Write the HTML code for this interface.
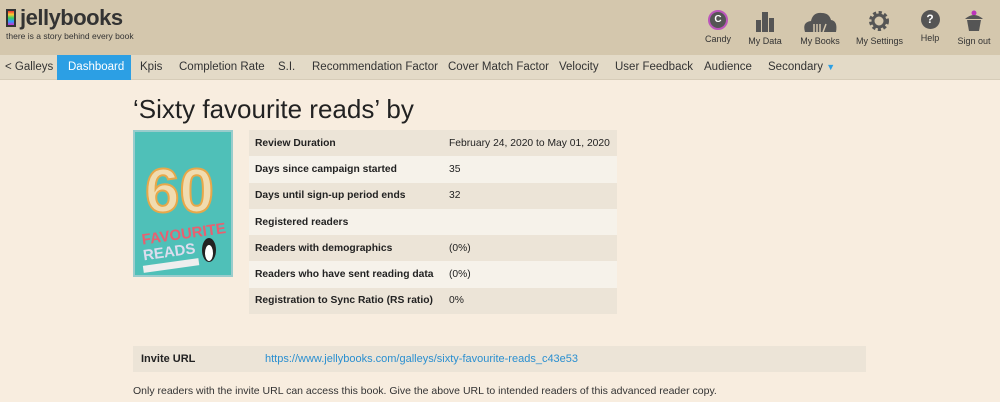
<!DOCTYPE html>
<html><head><style>
*{margin:0;padding:0;box-sizing:border-box}
body{width:1000px;height:402px;overflow:hidden;background:#f8eddf;font-family:"Liberation Sans",sans-serif;color:#222;position:relative;white-space:nowrap}
.hdr{position:absolute;left:0;top:0;width:1000px;height:55px;background:#d4c7ad}
.logo{position:absolute;left:6px;top:5px;font-weight:bold;font-size:22px;color:#333;letter-spacing:-0.5px}
.logo i{display:inline-block;width:10px;height:18px;background:linear-gradient(#e33,#fc3,#3c6,#39f,#c3c);border:2px solid #333;vertical-align:-2px;margin-right:4px}
.tag{position:absolute;left:6px;top:31px;font-size:8.5px;color:#333}
.ic{position:absolute;top:10px;text-align:center;font-size:9px;color:#333}
.ic div{margin:0 auto 4px;height:22px}
.nav{position:absolute;left:0;top:55px;width:1000px;height:25px;background:#e3dac7;border-bottom:1px solid #d6ccb8}
.nav span{position:absolute;top:0;height:25px;line-height:25px;font-size:11.5px;color:#333}
.nav .act{background:#2c9fe4;color:#fff;padding:0 11px;width:74px}
h1{position:absolute;left:133px;top:94px;font-weight:normal;font-size:26px;color:#222}
.cover{position:absolute;left:133px;top:130px;width:100px;height:147px;background:#4fc0b8;border:2px solid #9cc}
table{position:absolute;left:249px;top:130px;width:368px;border-collapse:collapse;font-size:10.3px}
td{height:26.3px;padding:0 6px}
td:first-child{font-weight:bold;width:194px}
tr:nth-child(odd){background:#ece4d7}tr:nth-child(even){background:#f6f2ea}
.inv{position:absolute;left:133px;top:346px;width:733px;height:26px;background:#ece4d7;font-size:11px;line-height:26px}
.inv b{position:absolute;left:8px}.inv a{position:absolute;left:132px;color:#2a8fd0;text-decoration:none}
.note{position:absolute;left:133px;top:385px;font-size:10.5px;color:#333}
</style></head><body>
<div class="hdr">
<div class="logo"><i></i>jellybooks</div>
<div class="tag">there is a story behind every book</div>
<div class="ic" style="left:703px;width:30px"><div style="width:20px;height:20px;border-radius:50%;background:#555;border:2px solid #b5b;color:#fff;font-size:10px;line-height:16px;font-weight:bold">C</div>Candy</div>
<div class="ic" style="left:748px;width:34px"><div><svg width="22" height="22"><rect x="2" y="10" width="5" height="12" fill="#555"/><rect x="8" y="2" width="6" height="20" fill="#555"/><rect x="15" y="8" width="5" height="14" fill="#555"/></svg></div>My Data</div>
<div class="ic" style="left:800px;width:40px"><div><svg width="36" height="22"><path d="M3 22 Q0 12 9 11 Q11 2 20 3 Q27 3 29 10 Q36 11 34 22Z" fill="#555"/><path d="M12 22V14M15 22V14M18 22V14M21 22L24 14" stroke="#d4c7ad" stroke-width="1.5"/></svg></div>My Books</div>
<div class="ic" style="left:856px;width:46px"><div><svg width="22" height="22"><circle cx="11" cy="11" r="8" fill="none" stroke="#555" stroke-width="4" stroke-dasharray="3 2.3"/><circle cx="11" cy="11" r="6" fill="none" stroke="#555" stroke-width="3"/></svg></div>My Settings</div>
<div class="ic" style="left:918px;width:24px"><div style="width:19px;height:19px;border-radius:50%;background:#555;color:#fff;font-size:12px;font-weight:bold;line-height:19px">?</div>Help</div>
<div class="ic" style="left:956px;width:36px"><div><svg width="22" height="22"><circle cx="11" cy="3" r="2.5" fill="#b3b"/><path d="M2 9 Q11 1 20 9Z" fill="#555"/><path d="M4 10H18L16 21H6Z" fill="#555"/></svg></div>Sign out</div>
</div>
<div class="nav">
<span style="left:5px">&lt; Galleys</span>
<span class="act" style="left:57px">Dashboard</span>
<span style="left:140px">Kpis</span>
<span style="left:179px">Completion Rate</span>
<span style="left:278px">S.I.</span>
<span style="left:312px">Recommendation Factor</span>
<span style="left:448px">Cover Match Factor</span>
<span style="left:559px">Velocity</span>
<span style="left:615px">User Feedback</span>
<span style="left:704px">Audience</span>
<span style="left:768px">Secondary <span style="position:static;color:#2c9fe4;font-size:9px">&#9660;</span></span>
</div>
<h1>‘Sixty favourite reads’ by</h1>
<div class="cover"><svg width="96" height="143"><text x="10" y="80" font-size="62" font-weight="bold" fill="#f1dcb0" stroke="#e7a84a" stroke-width="2" font-family="Liberation Sans">60</text><text x="6" y="108" font-size="15" font-weight="bold" fill="#e86070" font-family="Liberation Sans" transform="rotate(-8 40 100)">FAVOURITE</text><text x="8" y="124" font-size="15" font-weight="bold" fill="#dde" font-family="Liberation Sans" transform="rotate(-8 40 120)">READS</text><ellipse cx="74" cy="118" rx="7" ry="12" fill="#222"/><ellipse cx="74" cy="121" rx="4" ry="8" fill="#fff"/><rect x="8" y="130" width="56" height="7" fill="#eee" transform="rotate(-8 36 133)"/></svg></div>
<table>
<tr><td>Review Duration</td><td>February 24, 2020 to May 01, 2020</td></tr>
<tr><td>Days since campaign started</td><td>35</td></tr>
<tr><td>Days until sign-up period ends</td><td>32</td></tr>
<tr><td>Registered readers</td><td></td></tr>
<tr><td>Readers with demographics</td><td>(0%)</td></tr>
<tr><td>Readers who have sent reading data</td><td>(0%)</td></tr>
<tr><td>Registration to Sync Ratio (RS ratio)</td><td>0%</td></tr>
</table>
<div class="inv"><b>Invite URL</b><a>https://www.jellybooks.com/galleys/sixty-favourite-reads_c43e53</a></div>
<div class="note">Only readers with the invite URL can access this book. Give the above URL to intended readers of this advanced reader copy.</div>
</body></html>
